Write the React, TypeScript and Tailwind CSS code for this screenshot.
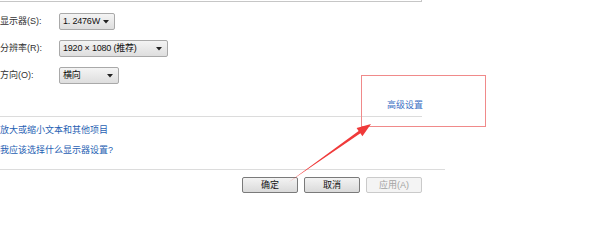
const Caret = () => (
  <svg width="6" height="4" viewBox="0 0 6 4" className="shrink-0">
    <path d="M0 0 L6 0 L3 3.5 Z" fill="#222" />
  </svg>
)

const Dropdown = ({ value, width }: { value: string; width: string }) => (
  <div className={`${width} h-[17px] flex items-center justify-between pl-[3px] pr-[5px] border border-[#a9a9a9] rounded-[2px] bg-gradient-to-b from-[#f4f4f4] to-[#dedede] text-[#111]`}>
    <span className="whitespace-nowrap tracking-[-0.2px]">{value}</span>
    <Caret />
  </div>
)

const rows = [
  { label: "显示器(S):", value: "1. 2476W", width: "w-[56px]" },
  { label: "分辨率(R):", value: "1920 × 1080 (推荐)", width: "w-[109px]" },
  { label: "方向(O):", value: "横向", width: "w-[60px]" },
]

export default function App() {
  return (
    <div className="relative w-[600px] h-[240px] bg-white overflow-hidden text-[9px] leading-none text-[#333] font-['Liberation_Sans','Noto_Sans_CJK_SC',sans-serif]">
      <div className="w-[422px] h-[2px] border-b border-r border-[#c6c6c6]" />

      <div className="mt-[11px] flex flex-col gap-[10px]">
        {rows.map((row) => (
          <div key={row.label} className="h-[17px] flex items-center">
            <span className="w-[59px] whitespace-nowrap">{row.label}</span>
            <Dropdown value={row.value} width={row.width} />
          </div>
        ))}
      </div>

      <div className="w-[423px] mt-[15px] h-[12px] flex justify-end items-center text-[#3a6fc4]">
        高级设置
      </div>
      <div className="mt-[5px] w-[422px] h-px bg-[#dcdcdc]" />

      <div className="mt-[3px] flex flex-col text-[#1f5fb3] leading-[20px]">
        <span>放大或缩小文本和其他项目</span>
        <span>我应该选择什么显示器设置?</span>
      </div>

      <div className="mt-[9px] w-[445px] h-px bg-[#dcdcdc]" />

      <div className="mt-[7px] w-[422px] flex justify-end gap-[6px]">
        <button className="w-[56px] h-[16px] border border-[#7a7a7a] rounded-[2px] bg-gradient-to-b from-[#f3f3f3] to-[#dadada] text-[#111]">确定</button>
        <button className="w-[56px] h-[16px] border border-[#7a7a7a] rounded-[2px] bg-gradient-to-b from-[#f3f3f3] to-[#dadada] text-[#111]">取消</button>
        <button className="w-[56px] h-[16px] border border-[#cacaca] rounded-[2px] bg-[#f4f4f4] text-[#a3a3a3]">应用(A)</button>
      </div>

      <div className="absolute left-[361px] top-[75px] w-[125px] h-[52px] border border-[#f08a8a]" />

      <svg className="absolute left-0 top-0" width="600" height="240" viewBox="0 0 600 240">
        <polygon
          points="289,182 360.4,133.3 362.4,136.2 371,124 356.6,128 358.6,130.9"
          fill="#f03a3a"
        />
      </svg>
    </div>
  )
}
